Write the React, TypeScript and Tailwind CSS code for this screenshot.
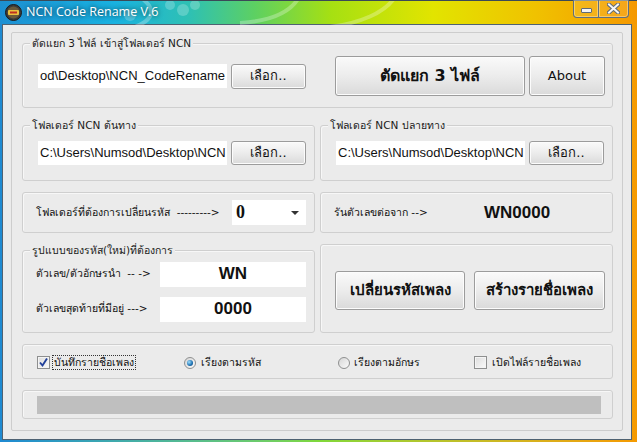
import type { ReactNode } from 'react'

function Btn({ children, className = '' }: { children: ReactNode; className?: string }) {
  return (
    <button
      className={`flex items-center justify-center whitespace-nowrap rounded-[3px] border border-[#9c9c9c] bg-gradient-to-b from-[#fafafa] via-[#ececec] to-[#dadada] text-[#111] shadow-[inset_0_0_0_1px_#fcfcfc] ${className}`}
    >
      {children}
    </button>
  )
}

function Box({ legend, className = '', children }: { legend?: string; className?: string; children?: ReactNode }) {
  return (
    <div className={`relative rounded-[3px] border border-[#cfcfcf] shadow-[inset_1px_1px_0_#f7f7f7] ${className}`}>
      {legend && (
        <span className="absolute left-[7px] top-[-9px] whitespace-nowrap bg-[#ebebeb] px-[2px] text-[10.5px] leading-[16px] text-[#1a1a1a]">
          {legend}
        </span>
      )}
      {children}
    </div>
  )
}

function Field({ text, className = '' }: { text: string; className?: string }) {
  return (
    <div className={`flex items-center overflow-hidden whitespace-nowrap bg-white pl-[2px] font-['Liberation_Sans',sans-serif] text-[13px] text-[#111] ${className}`}>
      {text}
    </div>
  )
}

function CheckBox({ checked }: { checked?: boolean }) {
  return (
    <span className="flex h-[13px] w-[13px] shrink-0 items-center justify-center border border-[#8e8f8f] bg-gradient-to-br from-[#dcdcdc] to-[#fbfbfb] shadow-[inset_0_0_0_1px_#f4f4f4]">
      {checked && (
        <svg width="11" height="11" viewBox="0 0 11 11">
          <path d="M2 5.5 L4.5 8.5 L9 1.5" fill="none" stroke="#21409a" strokeWidth="1.9" />
        </svg>
      )}
    </span>
  )
}

function Radio({ checked }: { checked?: boolean }) {
  return (
    <span className="flex h-[12px] w-[12px] shrink-0 items-center justify-center rounded-full border border-[#8e8f8f] bg-gradient-to-br from-[#d6d6d6] to-[#fbfbfb]">
      {checked && (
        <span className="h-[6px] w-[6px] rounded-full bg-[radial-gradient(circle_at_35%_35%,#9fe0ff,#1c6fb0_60%,#0c3c70)]" />
      )}
    </span>
  )
}

export default function App() {
  return (
    <div className="relative h-[442px] w-[637px] overflow-hidden bg-gradient-to-r from-[#1f8ad2] via-[#7fd83a] to-[#f59a00] font-[Tahoma,'DejaVu_Sans',sans-serif] text-[10.5px] text-[#111]">
      {/* title bar */}
      <div className="relative flex h-[24px] items-center border-t border-[#3b4a57] bg-[linear-gradient(to_right,#1c8fd2_0%,#19b2e0_18%,#2fc1b2_30%,#5dd062_40%,#a6e012_52%,#e2e400_68%,#f0c200_84%,#f59800_100%)]">
        <svg className="absolute left-0 top-0" width="637" height="24" viewBox="0 0 637 24">
          <g fill="none" stroke="#ffffff" strokeOpacity="0.28" strokeWidth="4">
            <path d="M140 -4 C 160 10, 150 20, 135 26" />
            <path d="M300 -6 C 292 12, 270 20, 240 22" />
            <path d="M395 -4 C 385 12, 360 22, 330 26" />
          </g>
          <g fill="#ffffff" fillOpacity="0.22">
            <circle cx="130" cy="14" r="6" />
            <circle cx="170" cy="4" r="5" />
            <circle cx="183" cy="9" r="6" />
            <circle cx="195" cy="4" r="5" />
          </g>
        </svg>
        <svg className="relative ml-[5px]" width="17" height="17" viewBox="0 0 17 17">
          <circle cx="8.5" cy="8.5" r="8" fill="#3a3a3a" stroke="#1a1a1a" />
          <circle cx="8.5" cy="8.5" r="6" fill="#6b5a3a" />
          <rect x="3" y="6" width="11" height="5" rx="1" fill="#e8c040" />
          <rect x="5" y="7.5" width="7" height="2" fill="#c03020" />
        </svg>
        <span className="relative ml-[4px] font-['Open_Sans',sans-serif] text-[12.5px] text-white [text-shadow:0_0_5px_rgba(0,0,0,0.85)]">
          NCN Code Rename V.6
        </span>
        <div className="absolute right-[8px] top-[-1px] flex h-[18px]">
          <div className="flex w-[26px] items-center justify-center rounded-bl-[4px] border border-t-0 border-[#5e6f80] bg-white/10 shadow-[inset_0_0_0_1px_rgba(255,255,255,0.35)]">
            <span className="mt-[4px] h-[5px] w-[11px] rounded-[1px] border border-[#5f6b78] bg-[#f4f4f4]" />
          </div>
          <div className="flex w-[30px] items-center justify-center rounded-br-[4px] border border-l-0 border-t-0 border-[#5e6f80] bg-white/10 shadow-[inset_0_0_0_1px_rgba(255,255,255,0.35)]">
            <svg width="13" height="11" viewBox="0 0 13 11">
              <path d="M2 1.5 L11 9.5 M11 1.5 L2 9.5" stroke="#5f6b78" strokeWidth="4" strokeLinecap="square" />
              <path d="M2 1.5 L11 9.5 M11 1.5 L2 9.5" stroke="#f6f6f6" strokeWidth="2" strokeLinecap="square" />
            </svg>
          </div>
        </div>
      </div>

      {/* client */}
      <div className="ml-[2px] mr-[5px] h-[416px] border border-[#4f6272] bg-[#ebebeb] px-[8px] pb-[8px] pt-[7px]">
        <div className="flex h-[399px] flex-col rounded-[2px] border border-[#cdcdcd] pb-[11px] pl-[10px] pr-[9px] pt-[10px]">
          {/* row 1 */}
          <Box legend="ตัดแยก 3 ไฟล์ เข้าสู่โฟลเดอร์ NCN" className="flex h-[65px] items-center pl-[15px]">
            <Field text="od\Desktop\NCN_CodeRename" className="mt-[1px] h-[24px] w-[189px]" />
            <Btn className="ml-[4px] mt-[1px] h-[25px] w-[75px] text-[13px]">เลือก..</Btn>
            <Btn className="ml-[29px] h-[40px] w-[190px] text-[16px] font-bold">ตัดแยก 3 ไฟล์</Btn>
            <Btn className="ml-[4px] h-[40px] w-[76px] text-[13px]">About</Btn>
          </Box>

          {/* row 2 */}
          <div className="mt-[17px] flex gap-[5px]">
            <Box legend="โฟลเดอร์ NCN ต้นทาง" className="flex h-[56px] w-[293px] items-center pl-[15px]">
              <Field text="C:\Users\Numsod\Desktop\NCN" className="h-[24px] w-[189px]" />
              <Btn className="ml-[4px] h-[24px] w-[75px] text-[13px]">เลือก..</Btn>
            </Box>
            <Box legend="โฟลเดอร์ NCN ปลายทาง" className="flex h-[56px] w-[293px] items-center pl-[15px]">
              <Field text="C:\Users\Numsod\Desktop\NCN" className="h-[24px] w-[189px]" />
              <Btn className="ml-[4px] h-[24px] w-[75px] text-[13px]">เลือก..</Btn>
            </Box>
          </div>

          {/* row 3 */}
          <div className="mt-[11px] flex gap-[5px]">
            <Box className="flex h-[41px] w-[293px] items-center pl-[13px] pr-[8px]">
              <span className="whitespace-nowrap">โฟลเดอร์ที่ต้องการเปลี่ยนรหัส&nbsp;&nbsp;---------&gt;</span>
              <div className="ml-auto flex h-[25px] w-[74px] items-center justify-between bg-white pl-[4px] pr-[7px]">
                <span className="font-['Liberation_Serif',serif] text-[18px] font-bold">0</span>
                <svg width="8" height="4" viewBox="0 0 8 4">
                  <path d="M0 0 H8 L4 4 Z" fill="#333" />
                </svg>
              </div>
            </Box>
            <Box className="flex h-[41px] w-[293px] items-center pl-[13px]">
              <span className="w-[150px] whitespace-nowrap">รันตัวเลขต่อจาก --&gt;</span>
              <span className="font-['Liberation_Sans',sans-serif] text-[17px] font-bold">WN0000</span>
            </Box>
          </div>

          {/* row 4 */}
          <div className="mt-[11px] flex items-end gap-[5px]">
            <Box legend="รูปแบบของรหัส(ใหม่)ที่ต้องการ" className="flex h-[83px] w-[293px] flex-col justify-center gap-[10px] pl-[13px]">
              <div className="flex items-center">
                <span className="w-[124px] whitespace-nowrap">ตัวเลข/ตัวอักษรนำ&nbsp;&nbsp;-- -&gt;</span>
                <div className="flex h-[25px] w-[146px] items-center justify-center bg-white font-['Liberation_Sans',sans-serif] text-[17px] font-bold">WN</div>
              </div>
              <div className="flex items-center">
                <span className="w-[124px] whitespace-nowrap">ตัวเลขสุดท้ายที่มีอยู่ ---&gt;</span>
                <div className="flex h-[25px] w-[146px] items-center justify-center bg-white font-['Liberation_Sans',sans-serif] text-[17px] font-bold">0000</div>
              </div>
            </Box>
            <Box className="flex h-[89px] w-[293px] items-center gap-[9px] pl-[14px] pt-[4px]">
              <Btn className="h-[39px] w-[130px] text-[15px] font-bold">เปลี่ยนรหัสเพลง</Btn>
              <Btn className="h-[39px] w-[131px] text-[15px] font-bold">สร้างรายชื่อเพลง</Btn>
            </Box>
          </div>

          {/* row 5 */}
          <Box className="mt-[11px] grid h-[35px] grid-cols-[147px_154px_136px_auto] items-center whitespace-nowrap pl-[14px] pt-[2px]">
            <label className="flex items-center gap-[2px]">
              <CheckBox checked />
              <span className="border border-dotted border-[#333] px-[1px] leading-[13px]">บันทึกรายชื่อเพลง</span>
            </label>
            <label className="flex items-center gap-[5px]">
              <Radio checked />
              <span>เรียงตามรหัส</span>
            </label>
            <label className="flex items-center gap-[4px]">
              <Radio />
              <span>เรียงตามอักษร</span>
            </label>
            <label className="flex items-center gap-[5px]">
              <CheckBox />
              <span>เปิดไฟล์รายชื่อเพลง</span>
            </label>
          </Box>

          {/* row 6 */}
          <Box className="mt-[11px] flex h-[29px] items-center pl-[14px] pr-[11px]">
            <div className="h-[18px] w-full bg-[#bfbfbf]" />
          </Box>
        </div>
      </div>
    </div>
  )
}
